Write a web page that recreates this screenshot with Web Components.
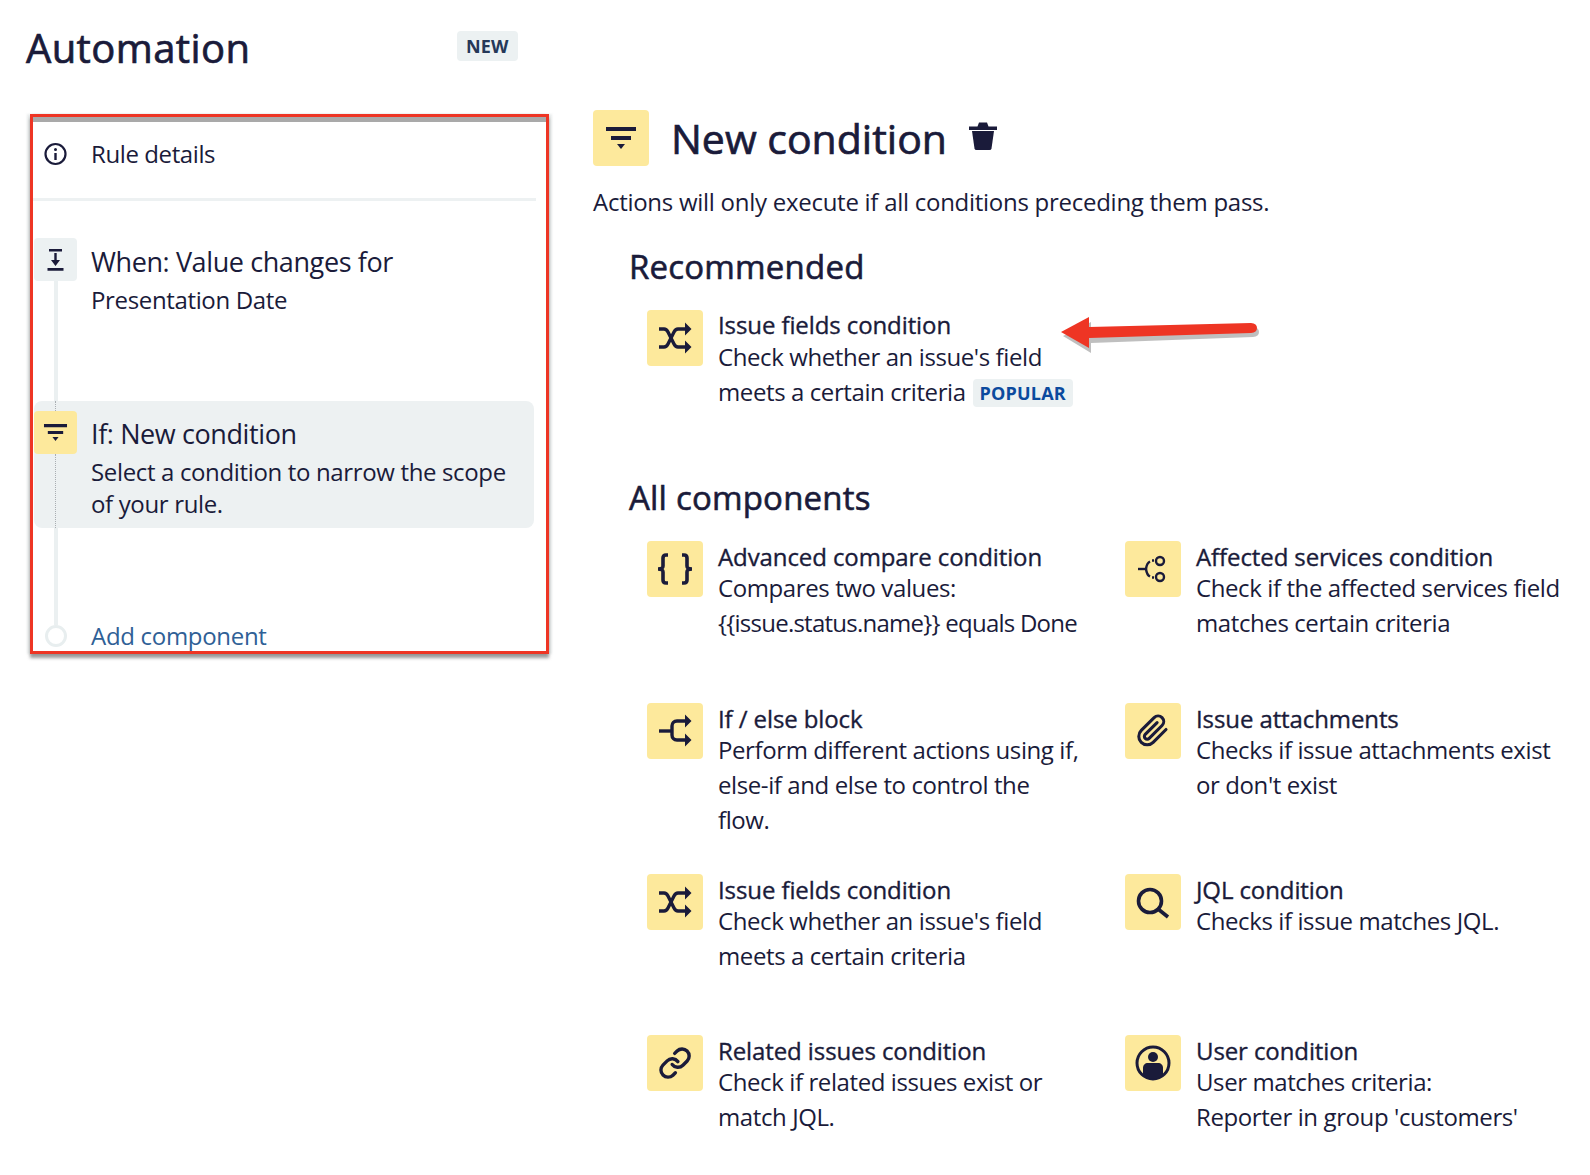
<!DOCTYPE html>
<html lang="en">
<head>
<meta charset="utf-8">
<title>Automation</title>
<style>
  html, body { margin: 0; background: #fff; }
  body { font-family: "Open Sans", "Noto Sans", sans-serif; color: #1a1b3a; }
</style>
</head>
<body>
<script>
const ICONS = {
  filter: '<path d="M13 17h30v4H13zM18 26h20v4H18z"/><path d="M24 34h8l-4 5z"/>',
  shuffle: '<g fill="none" stroke="currentColor" stroke-width="3.4"><path d="M12 19h5c2 0 3 1 4 3l6 12c1 2 2 3 4 3h9"/><path d="M12 37h5c2 0 3-1 4-3l6-12c1-2 2-3 4-3h9"/></g><path d="M38 12.500l6.500 6.500-6.500 6.500zM38 30.500l6.500 6.500-6.500 6.500z"/>',
  braces: '<g fill="none" stroke="currentColor" stroke-width="3.6"><path d="M21 14h-2c-2 0-3 1-3 3v8c0 2-1 3-5 3 4 0 5 1 5 3v8c0 2 1 3 3 3h2"/><path d="M35 14h2c2 0 3 1 3 3v8c0 2 1 3 5 3-4 0-5 1-5 3v8c0 2-1 3-3 3h-2"/></g>',
  services: '<g fill="none" stroke="currentColor" stroke-width="2.4"><circle cx="35" cy="20" r="4"/><circle cx="35" cy="36" r="4"/><path d="M13 28h8"/><path d="M21 28c.5-4 2-6.500 4-7.500M27 19.500h2"/><path d="M21 28c.5 4 2 6.500 4 7.500M27 36.500h2"/></g>',
  branch: '<g fill="none" stroke="currentColor" stroke-width="3.4"><path d="M12 28h13"/><path d="M25 28v-5c0-3 2-5 5-5h9"/><path d="M25 28v4c0 3 2 5 5 5h9"/></g><path d="M38 11.500l6.500 6.500-6.500 6.500zM38 30.500l6.500 6.500-6.500 6.500z"/>',
  clip: '<g transform="translate(11 11) scale(1.4)" fill="none" stroke="currentColor" stroke-width="2.2" stroke-linecap="round"><path d="M21.440 11.050l-9.190 9.190a6 6 0 0 1-8.490-8.490l9.190-9.190a4 4 0 0 1 5.660 5.660l-9.200 9.190a2 2 0 0 1-2.830-2.830l8.490-8.480"/></g>',
  search: '<g fill="none" stroke="currentColor"><circle cx="25" cy="27" r="11.500" stroke-width="3.6"/><path d="M33 35l10 8" stroke-width="3.6"/></g>',
  link: '<g transform="translate(11 11) scale(1.42)" fill="none" stroke="currentColor" stroke-width="2.4" stroke-linecap="round"><path d="M10 13a5 5 0 0 0 7.540.540l3-3a5 5 0 0 0-7.070-7.070l-1.720 1.710"/><path d="M14 11a5 5 0 0 0-7.540-.540l-3 3a5 5 0 0 0 7.070 7.070l1.710-1.710"/></g>',
  user: '<circle cx="28" cy="28" r="16" fill="none" stroke="currentColor" stroke-width="3"/><circle cx="28" cy="22" r="5"/><path d="M18 40v-7c0-3 2-5 5-5h10c3 0 5 2 5 5v7c-2 2-6 4-10 4s-8-2-10-4z"/>'
};

class TileIcon extends HTMLElement {
  constructor() {
    super();
    this.attachShadow({ mode: "open" });
  }
  connectedCallback() {
    const size = this.getAttribute("size") || 56;
    const tone = this.getAttribute("tone") === "grey" ? "#ecf1f2" : "#fde99c";
    this.shadowRoot.innerHTML = `
    <style>
      :host { display: block; flex: none; width: ${size}px; height: ${size}px; }
      .box { width: 100%; height: 100%; background: ${tone}; border-radius: 4px; color: #1a1b3a; }
      svg { display: block; width: 100%; height: 100%; fill: currentColor; }
    </style>
    <div class="box"><slot><svg viewBox="0 0 56 56">${ICONS[this.getAttribute("name")] || ""}</svg></slot></div>`;
  }
}
customElements.define("tile-icon", TileIcon);

class ComponentTile extends HTMLElement {
  constructor() {
    super();
    this.attachShadow({ mode: "open" });
  }
  connectedCallback() {
    this.shadowRoot.innerHTML = `
    <style>
      :host { display: flex; gap: 15px; align-items: flex-start; }
      .name { font-size: 24px; line-height: 30px; padding-top: var(--name-shift, 0); margin-bottom: calc(-1px - var(--name-shift, 0px)); -webkit-text-stroke: .35px currentColor; letter-spacing: -.1px; white-space: nowrap; }
      .desc { font-size: 24px; line-height: 35px; letter-spacing: -.4px; white-space: nowrap; }
    </style>
    <tile-icon name="${this.getAttribute("icon")}"></tile-icon>
    <div>
      <div class="name">${this.getAttribute("name")}</div>
      <div class="desc"><slot></slot></div>
    </div>`;
  }
}
customElements.define("component-tile", ComponentTile);

class SoftBadge extends HTMLElement {
  constructor() {
    super();
    this.attachShadow({ mode: "open" });
    this.shadowRoot.innerHTML = `
    <style>
      :host { display: inline-block; background: #ecf1f2; border-radius: 4px; font-weight: 700; line-height: 28px; padding: 0 7px; font-size: 18px; letter-spacing: .2px; vertical-align: 1px; }
    </style>
    <slot></slot>`;
  }
}
customElements.define("soft-badge", SoftBadge);

class AppHeader extends HTMLElement {
  constructor() {
    super();
    this.attachShadow({ mode: "open" });
    this.shadowRoot.innerHTML = `
    <style>
      :host { display: flex; align-items: flex-start; height: 114px; padding-left: 26px; box-sizing: border-box; }
      h1 { margin: 22px 0 0; font-size: 40px; line-height: 52px; font-weight: 400; -webkit-text-stroke: .7px currentColor; letter-spacing: .4px; width: 431px; }
      soft-badge { margin-top: 31px; color: #253858; padding: 1px 9px; }
    </style>
    <h1>Automation</h1>
    <soft-badge>NEW</soft-badge>`;
  }
}
customElements.define("app-header", AppHeader);

class RuleStep extends HTMLElement {
  constructor() {
    super();
    this.attachShadow({ mode: "open" });
  }
  connectedCallback() {
    const active = this.hasAttribute("active");
    const height = this.getAttribute("height") || 163;
    this.shadowRoot.innerHTML = `
    <style>
      :host { display: flex; gap: 14px; width: 500px; height: ${height}px; border-radius: 8px; ${active ? "background:#edf1f2;" : ""} }
      .rail { width: 43px; flex: none; display: flex; flex-direction: column; align-items: center; }
      .top { height: ${active ? 10 : 0}px; border-left: 1px dotted #a9aeb2; }
      .line { flex: 1; ${active ? "border-left: 1px dotted #a9aeb2;" : "width: 4px; background: #ebf0f1;"} }
      .text { padding-top: ${active ? 14 : 5}px; }
      .head { font-size: 27px; line-height: 38px; letter-spacing: -.4px; white-space: nowrap; }
      .sub { font-size: 24px; line-height: 32px; margin-top: ${active ? 3 : 3}px; letter-spacing: -.35px; white-space: nowrap; }
    </style>
    <div class="rail">
      <div class="top"></div>
      <tile-icon size="43" name="${this.getAttribute("icon") || ""}" tone="${active ? "yellow" : "grey"}"><slot name="glyph"></slot></tile-icon>
      <div class="line"></div>
    </div>
    <div class="text">
      <div class="head">${this.getAttribute("name")}</div>
      <div class="sub"><slot></slot></div>
    </div>`;
  }
}
customElements.define("rule-step", RuleStep);

class RulePanel extends HTMLElement {
  constructor() {
    super();
    this.attachShadow({ mode: "open" });
    this.shadowRoot.innerHTML = `
    <style>
      :host { display: block; width: 519px; height: 540px; margin-left: 30px; box-sizing: border-box; border: 3px solid #ee3524; overflow: hidden; }
      :host { box-shadow: 0 4px 3px rgba(60,60,60,.5), -3px 0 2px rgba(120,140,140,.15), 3px 0 2px rgba(120,140,140,.15); }
      .edge { height: 5px; background: #a9a9a9; }
      .info { display: flex; gap: 14px; height: 76px; padding-left: 1px; }
      .info svg { flex: none; width: 43px; height: 28px; margin-top: 18px; color: #1a1b3a; }
      .info span { font-size: 24px; line-height: 34px; padding-top: 15px; letter-spacing: -.4px; }
      hr { margin: 0 10px 37px 0; height: 3px; border: 0; background: #edf1f2; }
      .steps { padding-left: 1px; }
      .gap { display: flex; width: 43px; height: 97px; justify-content: center; }
      .gap i { width: 4px; background: #ebf0f1; }
      .add { display: flex; gap: 14px; align-items: center; height: 22px; }
      .add b { flex: none; width: 43px; display: flex; justify-content: center; }
      .add b i { display: block; width: 16px; height: 16px; border: 3px solid #e8eeef; border-radius: 50%; }
      .add span { font-size: 24px; line-height: 22px; color: #2f6096; font-weight: 400; letter-spacing: -.3px; }
    </style>
    <div class="edge"></div>
    <div class="info">
      <svg viewBox="0 0 43 28"><circle cx="21.500" cy="14" r="10" fill="none" stroke="currentColor" stroke-width="2.200"/><circle cx="21.500" cy="9.500" r="1.500" fill="currentColor"/><path d="M20.300 13h2.400v7h-2.400z" fill="currentColor"/></svg>
      <span>Rule details</span>
    </div>
    <hr>
    <div class="steps">
      <rule-step name="When: Value changes for" height="163">
        <svg slot="glyph" viewBox="0 0 43 43" style="display:block;width:43px;height:43px;color:#1a1b3a" fill="currentColor"><path d="M15 11h13v2.500H15zM20.300 15h2.400v7h3.300l-4.500 6-4.500-6h3.300zM13.500 30h16v2.800h-16z"/></svg>
        Presentation Date
      </rule-step>
      <rule-step active name="If: New condition" height="127">
        <svg slot="glyph" viewBox="0 0 56 56" style="display:block;width:43px;height:43px;color:#1a1b3a" fill="currentColor">${ICONS.filter}</svg>
        Select a condition to narrow the scope<br>of your rule.
      </rule-step>
      <div class="gap"><i></i></div>
      <div class="add"><b><i></i></b><span>Add component</span></div>
    </div>`;
  }
}
customElements.define("rule-panel", RulePanel);

class ConditionHead extends HTMLElement {
  constructor() {
    super();
    this.attachShadow({ mode: "open" });
    this.shadowRoot.innerHTML = `
    <style>
      :host { display: flex; align-items: center; height: 56px; }
      h2 { margin: 0 0 0 22px; font-size: 41px; line-height: 56px; font-weight: 400; -webkit-text-stroke: .7px currentColor; letter-spacing: 0; }
      svg { width: 28px; height: 30px; margin-left: 22px; margin-top: -4px; color: #1a1b3a; }
    </style>
    <tile-icon name="filter"></tile-icon>
    <h2>New condition</h2>
    <svg viewBox="0 0 28 30" fill="currentColor"><path d="M0 5.500h28V9H0zM10 1.500h8l1.500 4h-11z"/><path d="M3 10h22l-2.500 17.500q-.3 1.500-2 1.500H7.500q-1.700 0-2-1.500z"/></svg>`;
  }
}
customElements.define("condition-head", ConditionHead);

class SectionTitle extends HTMLElement {
  constructor() {
    super();
    this.attachShadow({ mode: "open" });
    this.shadowRoot.innerHTML = `
    <style>
      :host { display: block; font-size: 33px; line-height: 44px; -webkit-text-stroke: .6px currentColor; letter-spacing: .2px; }
    </style>
    <slot></slot>`;
  }
}
customElements.define("section-title", SectionTitle);

class AutomationPage extends HTMLElement {
  constructor() {
    super();
    this.attachShadow({ mode: "open" });
    this.shadowRoot.innerHTML = `
    <style>
      :host { display: grid; grid-template-columns: 593px 1fr; position: relative; height: 1175px; overflow: hidden; }
      .main { padding-top: 110px; }
      .lead { font-size: 24px; line-height: 35px; margin-top: 18px; letter-spacing: -.27px; }
      .group { padding-left: 36px; }
      .group section-title:first-child { margin-top: 26px; }
      .rec { margin: 21px 0 67px 18px; }
      .grid { --name-shift: 1px; margin: 21px 0 0 18px; display: grid; grid-template-columns: 478px 1fr; grid-template-rows: 162px 171px 161px auto; }
      .popular { color: #0b4a9e; margin-left: 1px; }
      .tight { letter-spacing: -.75px; }
      .arrow { position: absolute; left: 1058px; top: 310px; width: 204px; height: 50px; }
    </style>
    <div class="side">
      <app-header></app-header>
      <rule-panel></rule-panel>
    </div>
    <div class="main">
      <condition-head></condition-head>
      <div class="lead">Actions will only execute if all conditions preceding them pass.</div>
      <div class="group">
        <section-title>Recommended</section-title>
        <component-tile class="rec" icon="shuffle" name="Issue fields condition">Check whether an issue's field<br>meets a certain criteria <soft-badge class="popular">POPULAR</soft-badge></component-tile>
        <section-title>All components</section-title>
        <div class="grid">
          <component-tile icon="braces" name="Advanced compare condition">Compares two values:<br><span class="tight">{{issue.status.name}} equals Done</span></component-tile>
          <component-tile icon="services" name="Affected services condition">Check if the affected services field<br>matches certain criteria</component-tile>
          <component-tile icon="branch" name="If / else block">Perform different actions using if,<br>else-if and else to control the<br>flow.</component-tile>
          <component-tile icon="clip" name="Issue attachments">Checks if issue attachments exist<br>or don't exist</component-tile>
          <component-tile icon="shuffle" name="Issue fields condition">Check whether an issue's field<br>meets a certain criteria</component-tile>
          <component-tile icon="search" name="JQL condition">Checks if issue matches JQL.</component-tile>
          <component-tile icon="link" name="Related issues condition">Check if related issues exist or<br>match JQL.</component-tile>
          <component-tile icon="user" name="User condition">User matches criteria:<br>Reporter in group 'customers'</component-tile>
        </div>
      </div>
    </div>
    <svg class="arrow" viewBox="0 0 204 50">
      <path d="M3 22L31 8v9l162-4q6 .5 6 5t-6 5L31 29v10z" fill="#8a8a8a" opacity=".55" transform="translate(2 4)"/>
      <path d="M3 22L31 7v10l162-4q6 .5 6 5t-6 5L31 28v10z" fill="#ee3524"/>
    </svg>`;
  }
}
customElements.define("automation-page", AutomationPage);

document.body.appendChild(document.createElement("automation-page"));
</script>
</body>
</html>
